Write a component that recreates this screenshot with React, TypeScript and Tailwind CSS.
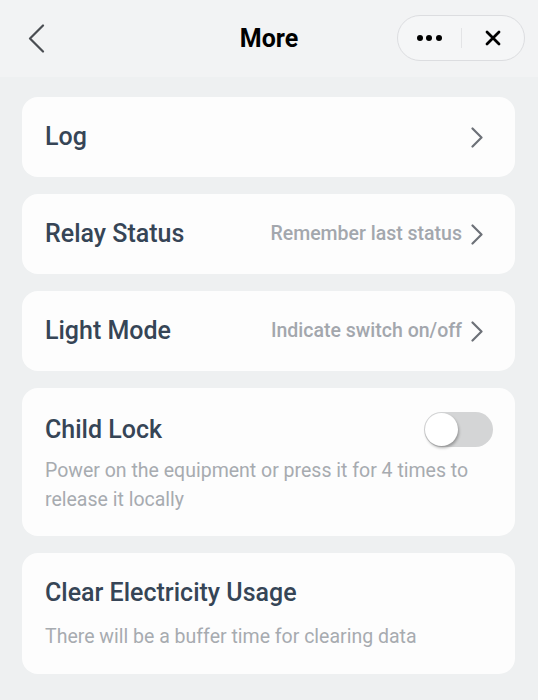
const NAV_ROWS = [
  { label: 'Log', value: '' },
  { label: 'Relay Status', value: 'Remember last status' },
  { label: 'Light Mode', value: 'Indicate switch on/off' },
]

function Chevron() {
  return (
    <svg width="12" height="21" viewBox="0 0 12 21" fill="none" className="text-[#6d7178]">
      <path d="M1.5 1.5 L10.5 10.5 L1.5 19.5" stroke="currentColor" strokeWidth="2.2" strokeLinecap="round" strokeLinejoin="round" />
    </svg>
  )
}

function NavRow({ label, value }: { label: string; value: string }) {
  return (
    <div className="h-[80px] rounded-[16px] bg-[#fdfdfd] pl-[23px] pr-[32px] flex items-center justify-between">
      <span className="text-[25px] font-medium text-[#364556]">{label}</span>
      <div className="flex items-center gap-[9px]">
        {value && <span className="text-[19.5px] font-medium text-[#a3a7ad]">{value}</span>}
        <Chevron />
      </div>
    </div>
  )
}

export default function App() {
  return (
    <div className="w-[538px] h-[700px] bg-[#eef0f1] font-['Roboto',sans-serif] overflow-hidden">
      {/* Header */}
      <div className="h-[77px] bg-[#f2f3f4] relative flex items-center justify-center">
        <svg width="17" height="29" viewBox="0 0 17 29" fill="none" className="absolute left-[28px] top-[24px] text-[#4a4d52]">
          <path d="M15 1.5 L2 14.5 L15 27.5" stroke="currentColor" strokeWidth="2.2" strokeLinecap="round" strokeLinejoin="round" />
        </svg>
        <span className="text-[25px] font-bold text-black">More</span>
        <div className="absolute right-[13px] top-[15px] w-[128px] h-[46px] rounded-full border border-[#dcdde0] bg-[#f5f6f7] flex items-center">
          <div className="flex-1 flex items-center justify-center gap-[3.5px]">
            <span className="w-[6px] h-[6px] rounded-full bg-black" />
            <span className="w-[6px] h-[6px] rounded-full bg-black" />
            <span className="w-[6px] h-[6px] rounded-full bg-black" />
          </div>
          <div className="w-px h-[20px] bg-[#e3e4e6]" />
          <div className="flex-1 flex items-center justify-center">
            <svg width="16" height="16" viewBox="0 0 16 16" fill="none">
              <path d="M2 2 L14 14 M14 2 L2 14" stroke="black" strokeWidth="2.8" strokeLinecap="round" />
            </svg>
          </div>
        </div>
      </div>

      <div className="px-[22px] pt-[20px] pr-[23px] flex flex-col gap-[17px]">
        {NAV_ROWS.map(r => (
          <NavRow key={r.label} {...r} />
        ))}

        {/* Child Lock */}
        <div className="rounded-[16px] bg-[#fdfdfd] pl-[23px] pr-[22px] pt-[23px] pb-[22px]">
          <div className="flex items-center justify-between">
            <span className="text-[25px] font-medium text-[#364556]">Child Lock</span>
            <div className="w-[69px] h-[35px] rounded-full bg-[#d4d5d6] flex items-center">
              <div className="w-[33px] h-[33px] ml-px rounded-full bg-white shadow-[1px_2px_3px_rgba(0,0,0,0.3)]" />
            </div>
          </div>
          <p className="mt-[7px] text-[19.5px] leading-[29px] text-[#a7abb0]">
            Power on the equipment or press it for 4 times to release it locally
          </p>
        </div>

        {/* Clear Electricity Usage */}
        <div className="rounded-[16px] bg-[#fdfdfd] pl-[23px] pr-[22px] pt-[23px] pb-[23px]">
          <div className="text-[25px] font-medium text-[#364556] leading-[34px]">Clear Electricity Usage</div>
          <p className="mt-[12px] text-[19.5px] leading-[29px] text-[#a7abb0]">There will be a buffer time for clearing data</p>
        </div>
      </div>
    </div>
  )
}
